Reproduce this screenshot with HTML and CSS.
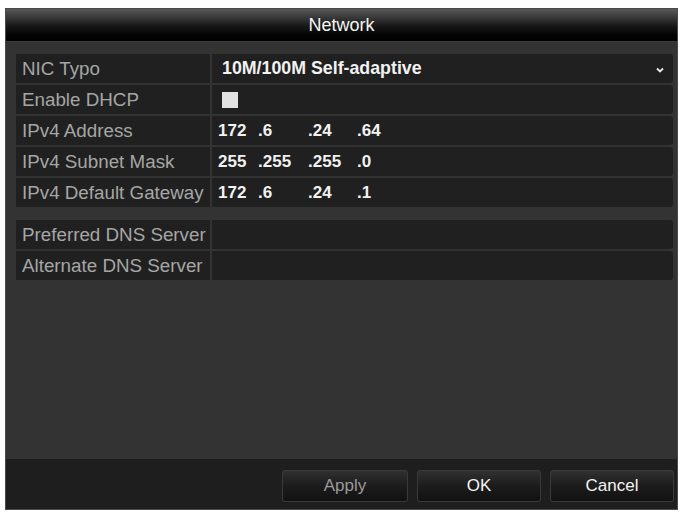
FILE: index.html
```html
<!DOCTYPE html>
<html>
<head>
<meta charset="utf-8">
<link rel="stylesheet" href="styles.css">
</head>
<body>
<div class="window">
  <div class="titlebar">Network</div>
  <div class="content">
    <div class="group">
      <div class="row">
        <div class="label">NIC Typo</div>
        <div class="value select"><span class="val">10M/100M Self-adaptive</span>
          <svg class="arrow" width="8" height="6" viewBox="0 0 8 6"><path d="M1 1.5 L4 4.5 L7 1.5" fill="none" stroke="#e8e8e8" stroke-width="1.8"/></svg>
        </div>
      </div>
      <div class="row">
        <div class="label">Enable DHCP</div>
        <div class="value"><span class="checkbox"></span></div>
      </div>
      <div class="row">
        <div class="label">IPv4 Address</div>
        <div class="value ip"><span>172</span><span>.6</span><span>.24</span><span>.64</span></div>
      </div>
      <div class="row">
        <div class="label">IPv4 Subnet Mask</div>
        <div class="value ip"><span>255</span><span>.255</span><span>.255</span><span>.0</span></div>
      </div>
      <div class="row">
        <div class="label">IPv4 Default Gateway</div>
        <div class="value ip"><span>172</span><span>.6</span><span>.24</span><span>.1</span></div>
      </div>
    </div>
    <div class="group dns">
      <div class="row">
        <div class="label">Preferred DNS Server</div>
        <div class="value"></div>
      </div>
      <div class="row">
        <div class="label">Alternate DNS Server</div>
        <div class="value"></div>
      </div>
    </div>
  </div>
  <div class="footer">
    <button class="btn disabled apply">Apply</button>
    <button class="btn ok">OK</button>
    <button class="btn cancel">Cancel</button>
  </div>
</div>
</body>
</html>
```
FILE: styles.css
```css
* { box-sizing: border-box; }
html, body { margin: 0; padding: 0; background: #ffffff; }
body {
  font-family: "Liberation Sans", Arial, sans-serif;
  width: 681px;
  height: 512px;
  overflow: hidden;
}
.window {
  margin: 8px 0 0 5px;
  width: 673px;
  height: 502px;
  background: #333333;
  border: 1px solid #4a4a4a;
  display: flex;
  flex-direction: column;
}
.titlebar {
  height: 33px;
  flex: none;
  background: linear-gradient(#585858 0%, #3a3a3a 25%, #161616 55%, #050505 80%, #000 100%);
  color: #f4f4f4;
  font-size: 18px;
  display: flex;
  align-items: center;
  justify-content: center;
  border-bottom: 1px solid #3c3c3c;
}
.content {
  flex: 1;
  padding: 12px 4px 0 10px;
}
.group {
  display: flex;
  flex-direction: column;
  gap: 2px;
}
.group.dns {
  margin-top: 13px;
}
.row {
  display: grid;
  grid-template-columns: 194px 1fr;
  column-gap: 2px;
  height: 29px;
}
.label, .value {
  background: #202020;
  display: flex;
  align-items: center;
}
.label {
  color: #a6a6a6;
  padding-left: 6px;
  white-space: nowrap;
  font-size: 18.8px;
}
.value {
  color: #f2f2f2;
  font-weight: bold;
  font-size: 17.8px;
  padding-left: 10px;
  border-radius: 0 3px 3px 0;
}
.select {
  justify-content: space-between;
  padding-right: 9px;
}
.arrow { display: block; margin-top: 2px; }
.checkbox {
  width: 16px;
  height: 16px;
  background: #e2e2e2;
  display: block;
}
.ip {
  display: grid;
  grid-template-columns: 40px 50px 49px auto;
  padding-left: 6px;
  font-size: 17px;
}
.ip span { display: block; }
.footer {
  height: 50px;
  flex: none;
  background: #1e1e1e;
  display: flex;
  justify-content: flex-end;
  align-items: flex-start;
  padding: 11px 3px 0 0;
  gap: 9px;
}
.btn {
  height: 32px;
  background: linear-gradient(#303030 0%, #1c1c1c 50%, #111111 100%);
  border: 1px solid #3a3a3a;
  border-radius: 3px;
  color: #f4f4f4;
  font-family: "Liberation Sans", Arial, sans-serif;
  font-size: 17px;
  padding: 0;
}
.apply { width: 126px; color: #9a9a9a; }
.ok { width: 124px; }
.cancel { width: 124px; }
```
